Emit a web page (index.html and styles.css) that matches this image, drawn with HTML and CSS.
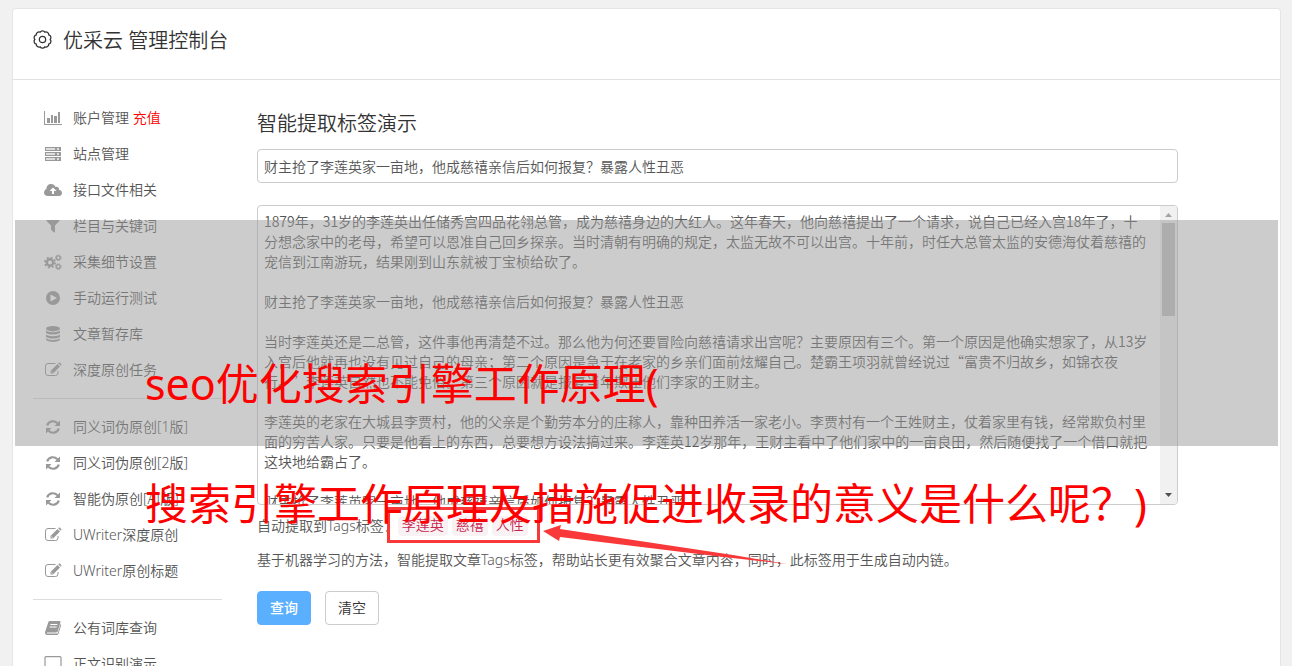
FILE: index.html
```html
<!DOCTYPE html>
<html lang="zh-CN">

<head>
  <meta charset="UTF-8">
  <meta name="viewport" content="width=device-width, initial-scale=1.0">
  <title>优采云 管理控制台</title>
  <link rel="stylesheet" href="styles.css">
</head>
<body>
  <!-- 图标 -->
  <svg class="sprite" aria-hidden="true">
    <symbol id="i-chart" viewBox="0 0 18 16"><path d="M0 1h1v13h17v1H0zM3 8h3v5H3zM7 5h2v8H7zM10 6h3v7h-3zM14 2h2v11h-2z"/></symbol>
    <symbol id="i-server" viewBox="0 0 18 16"><path fill="#ddd" d="M1 1h16v4H1zM1 6h16v4H1zM1 11h16v4H1z"/><path d="M1 1h16v1H1zM1 4h16v1H1zM1 6h16v1H1zM1 9h16v1H1zM1 11h16v1H1zM1 14h16v1H1zM1 1h1v4H1zM1 6h1v4H1zM1 11h1v4H1zM11 1h2v4h-2zM11 6h2v4h-2zM11 11h2v4h-2zM15 1h2v4h-2zM15 6h2v4h-2zM15 11h2v4h-2z"/></symbol>
    <symbol id="i-cloud" viewBox="0 0 18 16"><path fill-rule="evenodd" d="M4 14C1.500 14 0 12.500 0 10.500 0 9 1 7.600 2.400 7 2.300 4 4.500 2 7 2c2.200 0 3.800 1.200 4.500 3 1.800-.8 3.900.5 3.500 2.700 1.800.3 3 1.600 3 3.200 0 1.800-1.300 3.100-3.200 3.100zM9 5.500L5.500 9H8v3h2V9h2.500z"/></symbol>
    <symbol id="i-filter" viewBox="0 0 18 16"><path d="M3 2h12c.6 0 .8.600.4 1L11 7.600V14c0 .6-.6.800-1 .4L7.300 12c-.2-.2-.3-.4-.3-.6V7.600L2.600 3c-.4-.4-.2-1 .4-1z"/></symbol>
    <symbol id="i-cogs" viewBox="0 0 18 16"><g fill="none" stroke="currentColor"><circle cx="6" cy="8.500" r="3.200" stroke-width="2.400"/><circle cx="6" cy="8.500" r="5" stroke-width="1.800" stroke-dasharray="2 1.927"/><circle cx="14.300" cy="3.800" r="1.900" stroke-width="1.300"/><circle cx="14.300" cy="3.800" r="2.900" stroke-width="1" stroke-dasharray="1.200 1.078"/><circle cx="14.300" cy="12.600" r="1.900" stroke-width="1.300"/><circle cx="14.300" cy="12.600" r="2.900" stroke-width="1" stroke-dasharray="1.200 1.078"/></g></symbol>
    <symbol id="i-play" viewBox="0 0 18 16"><path fill-rule="evenodd" d="M9 1a7 7 0 1 0 0 14A7 7 0 0 0 9 1zM6.500 4.500L13 8l-6.500 3.500z"/></symbol>
    <symbol id="i-database" viewBox="0 0 18 16"><ellipse cx="9" cy="2.700" rx="7" ry="2.700"/><path d="M2 4.500c2 2.300 12 2.300 14 0v2c-1 2.700-13 2.700-14 0zM2 8.500c2 2.300 12 2.300 14 0v2c-1 2.700-13 2.700-14 0zM2 12.300c2 2.300 12 2.300 14 0v1.200c-1 3.200-13 3.200-14 0z"/></symbol>
    <symbol id="i-edit" viewBox="0 0 18 16"><path fill="none" stroke="currentColor" d="M11.500 1.500H4A2.500 2.500 0 0 0 1.500 4v7A2.500 2.500 0 0 0 4 13.500h7.500A2.500 2.500 0 0 0 14 11V9"/><path fill-rule="evenodd" d="M6.500 11.500V9L13.500 2l2.500 2.500-7 7zM7.300 9.400v.9h.9v.7l.6-.6-.9-.9zM14.200 1.300l.5-.5c.4-.4.9-.4 1.300 0l1.200 1.200c.4.400.4.900 0 1.300l-.5.500z"/></symbol>
    <symbol id="i-refresh" viewBox="0 0 18 16"><path fill="none" stroke="currentColor" stroke-width="2.200" d="M3.200 6.500C4.500 2 10 .800 13.500 4.300M14.800 9.500C13.500 14 8 15.200 4.500 11.700"/><path d="M16 1.500V7h-5.500zM2 14.500V9h5.500z"/></symbol>
    <symbol id="i-book" viewBox="0 0 18 16"><path fill-rule="evenodd" d="M6 1h9.500c.8 0 1.200.6 1 1.300l-2.700 9c-.2.700-.9 1.200-1.600 1.200H3.300c-.7 0-.7 1.100.2 1.100h9.300c.6 0 .9-.3 1.100-.8L16.500 4c.6.300.8.800.6 1.400l-2.600 8.400c-.2.700-.9 1.200-1.600 1.200H3.300C1.700 15 .600 13.400 1.100 12l3-9.300C4.400 1.600 5 1 6 1zM6.500 4l-.3 1h7l.3-1zM5.800 6.500l-.3 1h7l.3-1z"/></symbol>
    <symbol id="i-desktop" viewBox="0 0 18 16"><path fill="none" stroke="currentColor" stroke-width="1.200" d="M2 .6h14c.6 0 1 .4 1 1v9c0 .6-.4 1-1 1H2c-.6 0-1-.4-1-1v-9c0-.6.4-1 1-1z"/><path d="M7 12h4l1 3H6z"/></symbol>
  </svg>

  <div class="card">
    <header class="card-header">
      <svg class="gear" viewBox="0 0 18 18" aria-hidden="true">
        <path d="M6.740 2.060A2.600 2.600 0 0 1 11.260 2.060 2.600 2.600 0 0 1 14.910 4.710 2.600 2.600 0 0 1 16.300 9 2.600 2.600 0 0 1 14.910 13.290 2.600 2.600 0 0 1 11.260 15.940 2.600 2.600 0 0 1 6.740 15.940 2.600 2.600 0 0 1 3.090 13.290 2.600 2.600 0 0 1 1.700 9 2.600 2.600 0 0 1 3.090 4.710 2.600 2.600 0 0 1 6.740 2.060z"/>
        <circle cx="9" cy="9" r="3"/>
      </svg>
      <h2>优采云 管理控制台</h2>
    </header>

    <div class="card-body">
      <!-- 左侧菜单 -->
      <nav class="sidebar">
        <a href="#"><svg><use href="#i-chart"/></svg><span>账户管理 <b>充值</b></span></a>
        <a href="#"><svg><use href="#i-server"/></svg>站点管理</a>
        <a href="#"><svg><use href="#i-cloud"/></svg>接口文件相关</a>
        <a href="#"><svg><use href="#i-filter"/></svg>栏目与关键词</a>
        <a href="#"><svg><use href="#i-cogs"/></svg>采集细节设置</a>
        <a href="#"><svg><use href="#i-play"/></svg>手动运行测试</a>
        <a href="#"><svg><use href="#i-database"/></svg>文章暂存库</a>
        <a href="#"><svg><use href="#i-edit"/></svg>深度原创任务</a>
        <hr>
        <a href="#"><svg><use href="#i-refresh"/></svg>同义词伪原创[1版]</a>
        <a href="#"><svg><use href="#i-refresh"/></svg>同义词伪原创[2版]</a>
        <a href="#"><svg><use href="#i-refresh"/></svg>智能伪原创[AI版]</a>
        <a href="#"><svg><use href="#i-edit"/></svg>UWriter深度原创</a>
        <a href="#"><svg><use href="#i-edit"/></svg>UWriter原创标题</a>
        <hr>
        <a href="#"><svg><use href="#i-book"/></svg>公有词库查询</a>
        <a href="#"><svg><use href="#i-desktop"/></svg>正文识别演示</a>
      </nav>

      <!-- 标签提取表单 -->
      <form class="content">
        <h3>智能提取标签演示</h3>
        <input type="text" class="title-input" aria-label="标题" value="财主抢了李莲英家一亩地，他成慈禧亲信后如何报复？暴露人性丑恶">
        <div class="article-box">
          <textarea class="article" aria-label="正文">1879年，31岁的李莲英出任储秀宫四品花翎总管，成为慈禧身边的大红人。这年春天，他向慈禧提出了一个请求，说自己已经入宫18年了，十分想念家中的老母，希望可以恩准自己回乡探亲。当时清朝有明确的规定，太监无故不可以出宫。十年前，时任大总管太监的安德海仗着慈禧的宠信到江南游玩，结果刚到山东就被丁宝桢给砍了。

财主抢了李莲英家一亩地，他成慈禧亲信后如何报复？暴露人性丑恶

当时李莲英还是二总管，这件事他再清楚不过。那么他为何还要冒险向慈禧请求出宫呢？主要原因有三个。第一个原因是他确实想家了，从13岁入宫后他就再也没有见过自己的母亲；第二个原因是急于在老家的乡亲们面前炫耀自己。楚霸王项羽就曾经说过“富贵不归故乡，如锦衣夜行。”李莲英自然也不能免俗。第三个原因就是报复当年欺压他们李家的王财主。

李莲英的老家在大城县李贾村，他的父亲是个勤劳本分的庄稼人，靠种田养活一家老小。李贾村有一个王姓财主，仗着家里有钱，经常欺负村里面的穷苦人家。只要是他看上的东西，总要想方设法搞过来。李莲英12岁那年，王财主看中了他们家中的一亩良田，然后随便找了一个借口就把这块地给霸占了。

财主抢了李莲英家一亩地，他成慈禧亲信后如何报复？暴露人性丑恶</textarea>
          <div class="scrollbar" aria-hidden="true">
            <svg class="arrow-up" viewBox="0 0 17 17"><path d="M5 11l3.500-4 3.500 4z"/></svg>
            <div class="thumb"></div>
            <svg class="arrow-down" viewBox="0 0 17 17"><path d="M5 6l3.500 4L12 6z"/></svg>
          </div>
        </div>
        <div class="tags">
          <span>自动提取到Tags标签：</span>
          <div class="tag-list">
            <code>李莲英</code>
            <code>慈禧</code>
            <code>人性</code>
          </div>
        </div>
        <p class="help">基于机器学习的方法，智能提取文章Tags标签，帮助站长更有效聚合文章内容，同时，此标签用于生成自动内链。</p>
        <div class="actions">
          <button type="submit" class="btn btn-primary">查询</button>
          <button type="reset" class="btn">清空</button>
        </div>
      </form>
    </div>
  </div>

  <!-- 红色标注 -->
  <div class="mark-box"></div>
  <svg class="mark-arrow" viewBox="0 0 244 46" aria-hidden="true">
    <path d="M0 6L18 0l-1 4 173 26 54 9-64-7L17 12l-1 4z"/>
  </svg>

  <!-- 遮罩标题 -->
  <div class="mask"></div>
  <h1 class="caption">seo优化搜索引擎工作原理(<br>搜索引擎工作原理及措施促进收录的意义是什么呢？)</h1>
</body>

</html>
```

FILE: styles.css
```css
* {
  box-sizing: border-box;
}

body {
  position: relative;
  margin: 0;
  padding: 9px 12px 0 13px;
  height: 100vh;
  overflow: hidden;
  background-color: #f1f1f1;
  color: #555;
  font-family: "Noto Sans", "Noto Sans CJK SC", sans-serif;
  font-size: 14px;
  font-weight: 350;
  line-height: 20px;
}

h1,
h2,
h3,
p {
  margin: 0;
  font-weight: 350;
}

.sprite {
  display: none;
}

/* 主面板 */
.card {
  background-color: #fff;
  border-radius: 3px;
  box-shadow: 0 0 0 1px #e5e5e5;
}

.card-header {
  display: flex;
  align-items: center;
  gap: 11px;
  height: 71px;
  padding: 0 20px 10px;
  border-bottom: 1px solid #e1e1e1;
  color: #333;
}

.card-header h2 {
  padding-top: 4px;
  font-size: 20px;
  line-height: 30px;
}

.gear {
  width: 19px;
  height: 19px;
  fill: none;
  stroke: #333;
  stroke-width: 1.2;
}

.card-body {
  display: flex;
  gap: 35px;
  padding: 20px 0 20px 20px;
}

/* 左侧菜单 */
.sidebar {
  flex: 0 0 189px;
}

.sidebar a {
  display: flex;
  align-items: center;
  gap: 11px;
  height: 36px;
  padding-left: 11px;
  color: #555;
  text-decoration: none;
}

.sidebar svg {
  width: 18px;
  height: 16px;
  color: #999;
  fill: currentColor;
}

.sidebar b {
  color: #f00;
  font-weight: 350;
}

.sidebar hr {
  height: 1px;
  margin: 10px 0;
  border: 0;
  background-color: #ddd;
}

/* 表单 */
.content {
  flex: 1;
}

.content h3 {
  margin: 9px 0 10px;
  color: #333;
  font-size: 20px;
  line-height: 30px;
}

.title-input,
.article-box {
  width: 90%;
  border: 1px solid #ccc;
  border-radius: 4px;
  background-color: #fff;
}

.title-input,
.article {
  display: block;
  padding: 6px;
  color: #555;
  font: inherit;
}

.title-input {
  height: 34px;
  margin-bottom: 22px;
}

.article-box {
  display: flex;
  height: 300px;
  overflow: hidden;
}

.article {
  flex: 1;
  padding: 5px 10px 6px 6px;
  border: 0;
  background-color: transparent;
  font-family: "Noto Sans CJK SC", sans-serif;
  text-spacing-trim: space-all;
  resize: none;
  overflow: hidden;
}

/* 滚动条 */
.scrollbar {
  display: flex;
  flex-direction: column;
  width: 17px;
  background-color: #f1f1f1;
}

.scrollbar svg {
  width: 17px;
  height: 17px;
}

.arrow-up {
  fill: #a3a3a3;
}

.arrow-down {
  margin-top: auto;
  fill: #505050;
}

.thumb {
  height: 93px;
  margin: 0 2px;
  background-color: #c1c1c1;
}

.tags {
  display: flex;
  align-items: center;
  height: 20px;
  margin: 11px 0 14px;
}

.tag-list {
  display: flex;
  gap: 4px;
}

.tag-list code {
  padding: 0 4px;
  border-radius: 4px;
  background-color: #f9f2f4;
  color: #c7254e;
  font-family: "Liberation Mono", "Noto Sans CJK SC", monospace;
  font-size: 14px;
}

.actions {
  display: flex;
  gap: 14px;
  margin-top: 21px;
}

.btn {
  height: 34px;
  padding: 6px 12px;
  border: 1px solid #ccc;
  border-radius: 4px;
  background-color: #fff;
  color: #333;
  font: inherit;
}

.btn-primary {
  border-color: #5aafff;
  background-color: #5aafff;
  color: #fff;
  font-weight: 500;
}

/* 标注 */
.mark-box {
  position: absolute;
  top: 507px;
  left: 387px;
  width: 153px;
  height: 36px;
  border: 3px solid #f93939;
}

.mark-arrow {
  position: absolute;
  top: 525px;
  left: 543px;
  width: 244px;
  height: 46px;
  fill: #f93939;
}

/* 遮罩 */
.mask {
  position: absolute;
  top: 220px;
  right: 14px;
  left: 15px;
  height: 226px;
  background-color: rgba(153, 153, 153, 0.5);
}

.caption {
  position: absolute;
  top: 324px;
  left: 145px;
  color: #f00;
  font-size: 43px;
  font-weight: 400;
  line-height: 120px;
  white-space: nowrap;
}
```
